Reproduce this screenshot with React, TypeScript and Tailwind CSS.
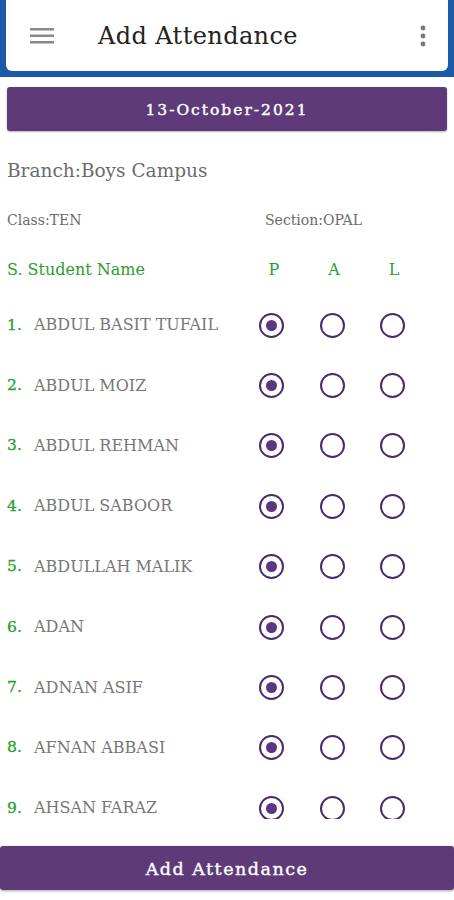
import React from "react";

const students = [
  "ABDUL BASIT TUFAIL",
  "ABDUL MOIZ",
  "ABDUL REHMAN",
  "ABDUL SABOOR",
  "ABDULLAH MALIK",
  "ADAN",
  "ADNAN ASIF",
  "AFNAN ABBASI",
  "AHSAN FARAZ",
];

function Radio({ checked }: { checked: boolean }) {
  return (
    <div className="w-[25px] h-[25px] rounded-full border-2 border-[#4a2a6e] flex items-center justify-center">
      {checked && <div className="w-[11px] h-[11px] rounded-full bg-[#5a3683]" />}
    </div>
  );
}

export default function App() {
  return (
    <div
      className="w-[454px] h-[900px] bg-white relative overflow-hidden flex flex-col"
      style={{ fontFamily: '"DejaVu Serif", "Liberation Serif", serif' }}
    >
      <div className="bg-[#1b5aa9] pl-[6px] pr-[6px] pb-[6px] pt-0">
        <div className="bg-white rounded-b-[6px] h-[71px] flex items-center pl-[23px] pr-[22px]">
          <svg width="26" height="20" viewBox="0 0 26 20">
            <rect x="1" y="2" width="24" height="2.5" fill="#8a8a8a" />
            <rect x="1" y="8.5" width="24" height="2.5" fill="#8a8a8a" />
            <rect x="1" y="15" width="24" height="2.5" fill="#8a8a8a" />
          </svg>
          <div className="ml-[43px] text-[24px] text-[#222] tracking-[0.4px] flex-1">Add Attendance</div>
          <svg width="6" height="22" viewBox="0 0 6 22">
            <circle cx="3" cy="3" r="2.4" fill="#777" />
            <circle cx="3" cy="11" r="2.4" fill="#777" />
            <circle cx="3" cy="19" r="2.4" fill="#777" />
          </svg>
        </div>
      </div>
      <div className="px-[7px] mt-[10px]">
        <div className="h-[44px] bg-[#5e3a79] rounded-[3px] flex items-center justify-center text-white text-[15.5px] tracking-[2px] pt-[3px] [-webkit-text-stroke:0.4px_white] shadow-[0_1px_2px_rgba(0,0,0,0.3)]">
          13-October-2021
        </div>
      </div>
      <div className="px-[7px] mt-[29px] text-[18.5px] text-[#6b6b6b] leading-[22px]">Branch:Boys Campus</div>
      <div className="flex px-[7px] mt-[28px] text-[14px] text-[#6b6b6b] leading-[20px]">
        <div className="w-[258px]">Class:TEN</div>
        <div>Section:OPAL</div>
      </div>
      <div className="flex items-center px-[7px] mt-[30px] text-[16px] text-[#2aa02a] leading-[20px]">
        <div className="w-[257px]">S. Student Name</div>
        <div className="w-[20px] text-center">P</div>
        <div className="w-[40px]" />
        <div className="w-[20px] text-center">A</div>
        <div className="w-[40px]" />
        <div className="w-[20px] text-center">L</div>
      </div>
      <div className="h-[524px] mt-[15px] overflow-hidden">
        {students.map((s, i) => (
          <div key={s} className="flex items-center h-[60.4px]">
            <div className="w-[34px] pl-[7px] text-[15.5px] text-[#2aa02a] [-webkit-text-stroke:0.3px_#2aa02a]">{i + 1}.</div>
            <div className="w-[225px] text-[16px] text-[#777] whitespace-nowrap">{s}</div>
            <Radio checked={true} />
            <div className="w-[36px]" />
            <Radio checked={false} />
            <div className="w-[35px]" />
            <Radio checked={false} />
          </div>
        ))}
      </div>
      <div className="mt-[27px] h-[44px] bg-[#5e3a79] rounded-[3px] flex items-center justify-center text-white text-[17.5px] tracking-[1.5px] pt-[2px] [-webkit-text-stroke:0.4px_white] shadow-[0_1px_3px_rgba(0,0,0,0.35)]">
        Add Attendance
      </div>
    </div>
  );
}
